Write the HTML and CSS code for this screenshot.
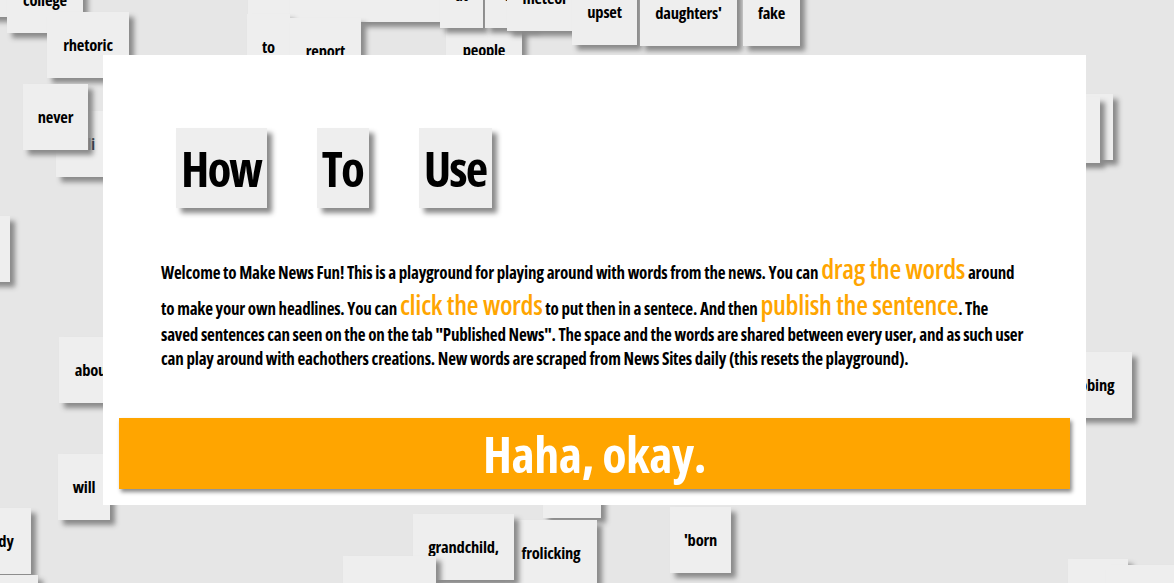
FILE: index.html
```html
<!DOCTYPE html>
<html lang="en">
<head>
<meta charset="utf-8">
<title>Make News Fun</title>
<link rel="stylesheet" href="styles.css">
</head>
<body>
<div class="playground">
  <div class="word" style="left:-50px;top:-49px;width:57px">news</div>
  <div class="word" style="left:7px;top:-33px;width:76px">college</div>
  <div class="word" style="left:47px;top:12px;width:82px">rhetoric</div>
  <div class="word" style="left:56px;top:111px;width:50px">Mali</div>
  <div class="word" style="left:23px;top:84px;width:65px">never</div>
  <div class="word" style="left:-50px;top:216px;width:60px">for</div>
  <div class="word" style="left:248px;top:-51px;width:54px">the</div>
  <div class="word" style="left:290px;top:-44px;width:150px">government</div>
  <div class="word" style="left:247px;top:14px;width:43px">to</div>
  <div class="word" style="left:290px;top:18px;width:71px">report</div>
  <div class="word" style="left:446px;top:17px;width:76px">people</div>
  <div class="word" style="left:440px;top:-38px;width:43px">at</div>
  <div class="word" style="left:485px;top:-38px;width:50px">of</div>
  <div class="word" style="left:507px;top:-35px;width:76px">meteor</div>
  <div class="word" style="left:572px;top:-21px;width:65px">upset</div>
  <div class="word" style="left:640px;top:-20px;width:97px">daughters'</div>
  <div class="word" style="left:743px;top:-20px;width:57px">fake</div>
  <div class="word" style="left:1040px;top:94px;width:73px">said</div>
  <div class="word" style="left:1030px;top:97px;width:70px">new</div>
  <div class="word" style="left:59px;top:337px;width:68px">about</div>
  <div class="word" style="left:1048px;top:352px;width:84px">robbing</div>
  <div class="word" style="left:543px;top:452px;width:58px">in</div>
  <div class="word" style="left:58px;top:454px;width:52px">will</div>
  <div class="word" style="left:-35px;top:508px;width:66px">body</div>
  <div class="word" style="left:-30px;top:575px;width:68px">and</div>
  <div class="word" style="left:670px;top:507px;width:61px">'born</div>
  <div class="word" style="left:505px;top:520px;width:92px">frolicking</div>
  <div class="word" style="left:413px;top:514px;width:101px">grandchild,</div>
  <div class="word" style="left:343px;top:556px;width:93px">will</div>
  <div class="word" style="left:1068px;top:559px;width:60px">war</div>
  <div class="word" style="left:1106px;top:565px;width:80px">storm</div>
</div>

<div class="modal">
  <h1 class="title">
    <span class="title-word">How</span>
    <span class="title-word">To</span>
    <span class="title-word">Use</span>
  </h1>
  <p class="intro">Welcome to Make News Fun! This is a playground for playing around with words from the news. You can <span class="hl">drag the words</span> around<br>to make your own headlines. You can <span class="hl">click the words</span> to put then in a sentece. And then <span class="hl">publish the sentence</span>. The<br>saved sentences can seen on the on the tab "Published News". The space and the words are shared between every user, and as such user<br>can play around with eachothers creations. New words are scraped from News Sites daily (this resets the playground).</p>
  <button class="ok">Haha, okay.</button>
</div>
</body>
</html>
```
FILE: styles.css
```css
* { box-sizing: border-box; }

html, body {
  margin: 0;
  width: 1174px;
  height: 583px;
  overflow: hidden;
  background: #e6e6e6;
  font-family: "Open Sans", "Liberation Sans Narrow", sans-serif;
  font-stretch: 75%;
  font-weight: 700;
  color: #000;
}

.playground {
  position: relative;
  width: 1174px;
  height: 583px;
}

.word {
  position: absolute;
  height: 66px;
  padding: 20px 0;
  line-height: 26px;
  font-size: 16.5px;
  letter-spacing: -0.2px;
  text-align: center;
  white-space: nowrap;
  overflow: hidden;
  background: #eeeeee;
  box-shadow: 5px 5px 5px #8a8a8a;
}

.modal {
  position: absolute;
  left: 103px;
  top: 55px;
  width: 983px;
  height: 450px;
  background: #fff;
  display: flex;
  flex-direction: column;
}

.title {
  display: flex;
  gap: 50px;
  margin: 73px 0 0 73px;
  padding: 0;
  font-size: 49px;
  font-weight: 700;
  letter-spacing: -2px;
  line-height: 80px;
}

.title-word {
  display: block;
  height: 80px;
  padding: 0 6px 0 5px;
  background: #eeeeee;
  box-shadow: 5px 5px 5px #8a8a8a;
}

.intro {
  width: 900px;
  margin: 43px 0 0 58px;
  font-size: 17px;
  letter-spacing: -0.2px;
  line-height: 24px;
}

.hl {
  color: #ffa500;
  font-size: 27px;
  font-weight: 600;
  letter-spacing: -0.3px;
  line-height: 36px;
}

.ok {
  margin: auto 16px 16px;
  height: 71px;
  border: 0;
  background: #ffa500;
  color: #fff;
  font-family: inherit;
  font-stretch: 75%;
  font-weight: 700;
  font-size: 50px;
  letter-spacing: -0.5px;
  box-shadow: 2px 3px 4px #8a8a8a;
  cursor: pointer;
}
```
